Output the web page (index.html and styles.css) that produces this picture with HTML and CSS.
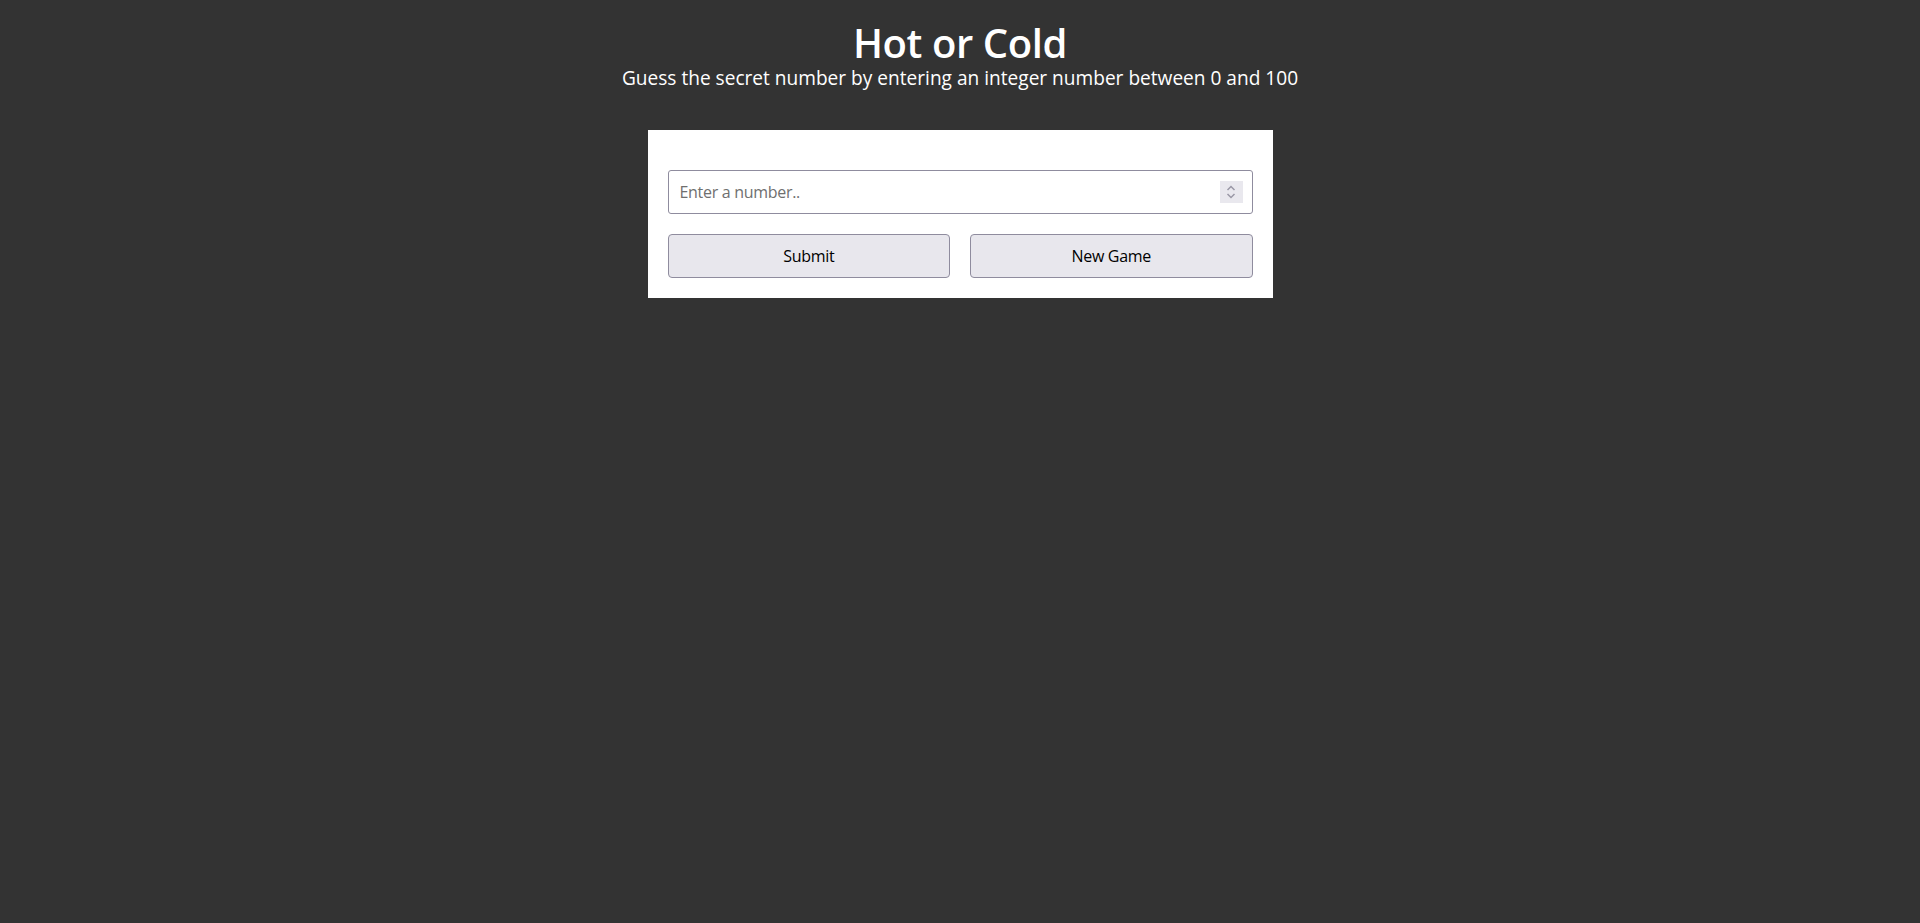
FILE: index.html
```html
<!DOCTYPE html>
<html lang="en">
<head>
<meta charset="utf-8">
<title>Hot or Cold</title>
<link rel="stylesheet" href="styles.css">
</head>
<body>
<header class="header">
  <h1 class="title">Hot or Cold</h1>
  <p class="subtitle">Guess the secret number by entering an integer number between 0 and 100</p>
</header>
<main class="card">
  <div class="field">
    <input class="field-input" type="text" placeholder="Enter a number..">
    <span class="spinner">
      <svg width="12" height="18" viewBox="0 0 12 18" fill="none" stroke="#9a98a6" stroke-width="1.5">
        <path d="M2.5 7 L6 3.5 L9.5 7"/>
        <path d="M2.5 11 L6 14.5 L9.5 11"/>
      </svg>
    </span>
  </div>
  <div class="actions">
    <button class="btn" type="button">Submit</button>
    <button class="btn" type="button">New Game</button>
  </div>
</main>
</body>
</html>
```
FILE: styles.css
```css
html, body {
  margin: 0;
  padding: 0;
  background: #333333;
}
body {
  font-family: "Open Sans", sans-serif;
  color: #ffffff;
}
.header {
  display: flex;
  flex-direction: column;
  align-items: center;
  padding-top: 19px;
}
.title {
  margin: 0;
  font-family: "Open Sans", sans-serif;
  font-weight: 600;
  font-size: 40px;
  line-height: 48px;
  letter-spacing: -0.4px;
}
.subtitle {
  margin: -1px 0 0 0;
  font-family: "Open Sans", sans-serif;
  font-weight: 500;
  font-size: 19.1px;
  line-height: 24px;
}
.card {
  width: 585px;
  margin: 40px auto 0;
  background: #ffffff;
  padding: 40px 20px 20px;
  display: flex;
  flex-direction: column;
  gap: 20px;
}
.field {
  height: 44px;
  box-sizing: border-box;
  border: 1px solid #8f8c9e;
  border-radius: 3px;
  display: flex;
  align-items: center;
  padding: 0 9px 0 11px;
}
.field-input {
  flex: 1;
  border: none;
  outline: none;
  background: transparent;
  font-family: "Open Sans", sans-serif;
  font-size: 16px;
  color: #222;
  padding: 0;
  letter-spacing: -0.3px;
}
.field-input::placeholder {
  color: #6f6f6f;
}
.spinner {
  width: 23px;
  height: 22px;
  background: #e9e8ee;
  display: flex;
  align-items: center;
  justify-content: center;
}
.actions {
  display: grid;
  grid-template-columns: 1fr 1fr;
  gap: 20px;
}
.btn {
  height: 44px;
  box-sizing: border-box;
  border: 1px solid #8f8c9e;
  border-radius: 4px;
  background: #e8e7ed;
  font-family: "Open Sans", sans-serif;
  font-size: 16px;
  color: #000;
  letter-spacing: -0.3px;
  padding: 0;
}
```
